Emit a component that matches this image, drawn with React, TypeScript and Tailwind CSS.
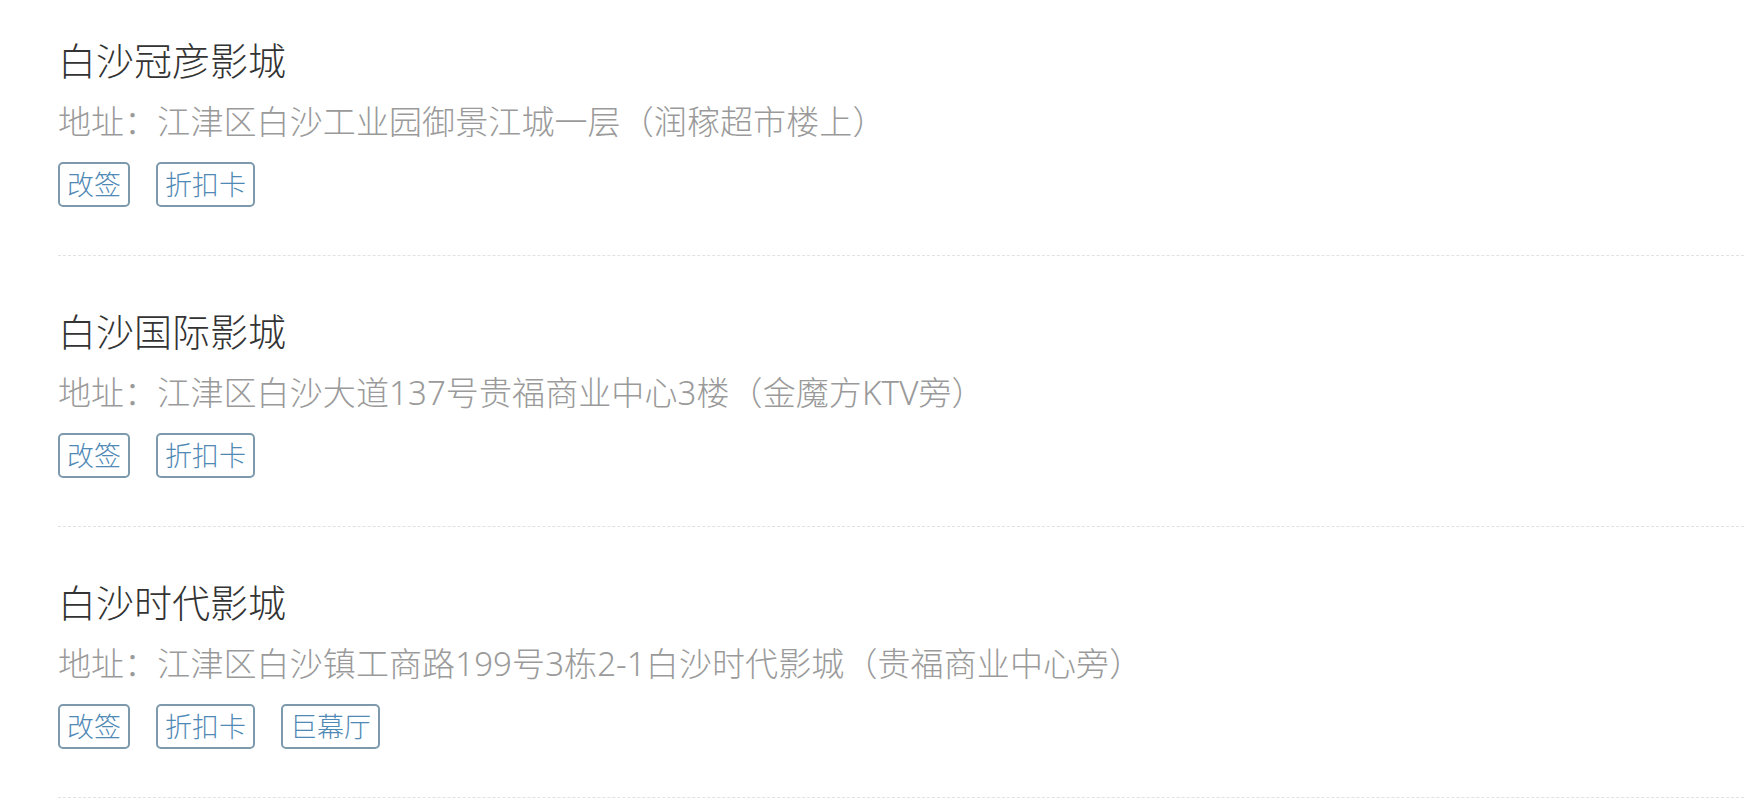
const cinemas = [
    {
        name: '白沙冠彦影城',
        address: '地址：江津区白沙工业园御景江城一层（润稼超市楼上）',
        tags: ['改签', '折扣卡'],
    },
    {
        name: '白沙国际影城',
        address: '地址：江津区白沙大道137号贵福商业中心3楼（金魔方KTV旁）',
        tags: ['改签', '折扣卡'],
    },
    {
        name: '白沙时代影城',
        address: '地址：江津区白沙镇工商路199号3栋2-1白沙时代影城（贵福商业中心旁）',
        tags: ['改签', '折扣卡', '巨幕厅'],
    },
];

const Tag = ({ label }: { label: string }) => (
    <span className='flex items-center h-[45px] px-[7px] border-2 border-[#7d9aad] rounded-[5px] text-[27px] font-light text-[#4f89b5] leading-none'>
        {label}
    </span>
);

const App = () => {
    return (
        <div
            className='min-h-screen bg-white pl-[58px]'
            style={{ fontFamily: '"Noto Sans", "Noto Sans CJK SC", sans-serif' }}
        >
            {cinemas.map((cinema) => (
                <div key={cinema.name} className='pt-[53px] first:pt-[38px] pb-[48px] border-b border-dashed border-[#e2e2e2]'>
                    <h3 className='text-[38px] leading-[44px] text-[#333] font-light'>{cinema.name}</h3>
                    <p className='mt-[18px] text-[33px] leading-[44px] text-[#9a9a9a] font-light tracking-[0.1px]'>{cinema.address}</p>
                    <div className='flex gap-[26px] mt-[18px]'>
                        {cinema.tags.map((tag) => (
                            <Tag key={tag} label={tag} />
                        ))}
                    </div>
                </div>
            ))}
        </div>
    );
};

export default App;
